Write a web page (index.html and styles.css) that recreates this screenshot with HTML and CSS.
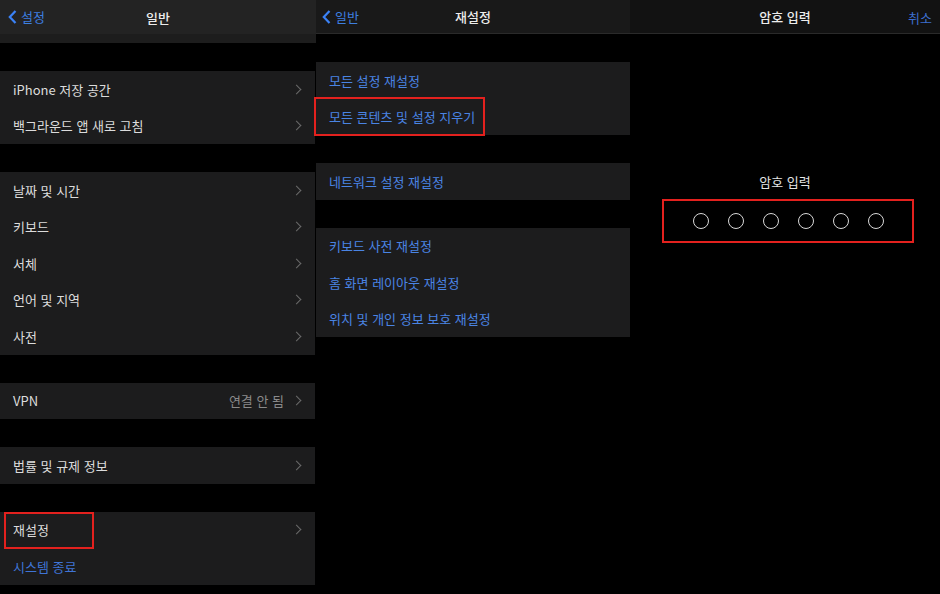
FILE: index.html
```html
<html lang="ko">
<head>
  <meta charset="UTF-8">
  <title>재설정</title>
  <link rel="stylesheet" href="styles.css">
</head>
<body>

<div class="screens">

  <!-- 일반 -->
  <div class="panel general">
    <div class="navbar">
      <span class="back"><svg width="9" height="14" viewBox="0 0 9 14"><path d="M7.5 1 L1.8 7 L7.5 13" fill="none" stroke="#3b82f6" stroke-width="2.2"/></svg>설정</span>
      <span class="title">일반</span>
    </div>
    <div class="subbar"></div>

    <div class="group">
      <div class="row"><span>iPhone 저장 공간</span><i class="chev"></i></div>
      <div class="row"><span>백그라운드 앱 새로 고침</span><i class="chev"></i></div>
    </div>

    <div class="group">
      <div class="row"><span>날짜 및 시간</span><i class="chev"></i></div>
      <div class="row"><span>키보드</span><i class="chev"></i></div>
      <div class="row"><span>서체</span><i class="chev"></i></div>
      <div class="row"><span>언어 및 지역</span><i class="chev"></i></div>
      <div class="row"><span>사전</span><i class="chev"></i></div>
    </div>

    <div class="group">
      <div class="row"><span>VPN</span><em class="value">연결 안 됨</em><i class="chev"></i></div>
    </div>

    <div class="group">
      <div class="row"><span>법률 및 규제 정보</span><i class="chev"></i></div>
    </div>

    <div class="group">
      <div class="row"><span>재설정</span><i class="chev"></i><b class="mark mark-reset"></b></div>
      <div class="row link"><span>시스템 종료</span></div>
    </div>
  </div>

  <!-- 재설정 -->
  <div class="panel reset">
    <div class="navbar">
      <span class="back"><svg width="9" height="14" viewBox="0 0 9 14"><path d="M7.5 1 L1.8 7 L7.5 13" fill="none" stroke="#3b82f6" stroke-width="2.2"/></svg>일반</span>
      <span class="title">재설정</span>
    </div>

    <div class="group">
      <div class="row link"><span>모든 설정 재설정</span></div>
      <div class="row link"><span>모든 콘텐츠 및 설정 지우기</span><b class="mark mark-erase"></b></div>
    </div>

    <div class="group">
      <div class="row link"><span>네트워크 설정 재설정</span></div>
    </div>

    <div class="group">
      <div class="row link"><span>키보드 사전 재설정</span></div>
      <div class="row link"><span>홈 화면 레이아웃 재설정</span></div>
      <div class="row link"><span>위치 및 개인 정보 보호 재설정</span></div>
    </div>
  </div>

  <!-- 암호 입력 -->
  <div class="panel passcode">
    <div class="navbar">
      <span class="title">암호 입력</span>
      <span class="cancel">취소</span>
    </div>
    <div class="prompt">암호 입력</div>
    <div class="dots">
      <i></i><i></i><i></i><i></i><i></i><i></i>
    </div>
  </div>

</div>

</body>
</html>
```

FILE: styles.css
```css
body {
  margin: 0;
  background: #000;
  font-family: "Noto Sans CJK KR", "Noto Sans", sans-serif;
  font-size: 13px;
  color: #dcdcdc;
}

.screens {
  display: flex;
  width: 940px;
  height: 594px;
  overflow: hidden;
}

.panel {
  display: flex;
  flex-direction: column;
  background: #000;
}

.general { width: 316px; }
.reset { width: 314px; }
.passcode { width: 310px; }

.navbar {
  position: relative;
  height: 34px;
  display: flex;
  align-items: center;
  justify-content: center;
  background: #1f1f1f;
  border-bottom: 1px solid #2a2a2a;
  box-sizing: border-box;
}

.general .navbar { background: #232323; border-bottom: none; }
.reset .navbar { background: #191919; }
.passcode .navbar { background: #121212; }

.subbar {
  height: 9px;
  background: #1d1d1d;
}

.title {
  color: #ececec;
  font-weight: 500;
}

.back {
  position: absolute;
  left: 8px;
  top: 9px;
  display: flex;
  align-items: center;
  gap: 4px;
  color: #3d7fe0;
  line-height: 16px;
}

.reset .back { left: 6px; }

.cancel {
  position: absolute;
  right: 8px;
  top: 8px;
  color: #3d6fd0;
}

.group {
  margin-top: 28px;
  background: #1c1c1d;
  display: flex;
  flex-direction: column;
}

.general .group { margin-right: 1px; }

.row {
  position: relative;
  height: 36.5px;
  display: flex;
  align-items: center;
  padding: 0 15px 0 13px;
}

.row span {
  flex: 1;
}

.link {
  color: #4a84e4;
}

.general .link {
  color: #3f74d6;
}

.value {
  font-style: normal;
  color: #8a8a8a;
  margin-right: 9px;
}

.chev {
  width: 6px;
  height: 6px;
  border-top: 1.5px solid #6a6a6a;
  border-right: 1.5px solid #6a6a6a;
  transform: rotate(45deg);
}

.mark {
  position: absolute;
  border: 2px solid #e3211e;
  box-sizing: border-box;
}

.mark-reset {
  left: 4px;
  top: 0;
  width: 90px;
  height: 37px;
}

.mark-erase {
  left: -2px;
  top: -2px;
  width: 171px;
  height: 39px;
}

.prompt {
  margin-top: 138px;
  text-align: center;
  color: #e4e4e4;
  line-height: 20px;
}

.dots {
  align-self: center;
  margin: 7px 0 0 6px;
  width: 252px;
  height: 44px;
  border: 2px solid #e3211e;
  box-sizing: border-box;
  display: flex;
  align-items: center;
  justify-content: center;
  gap: 19px;
}

.dots i {
  width: 16px;
  height: 16px;
  border: 1.5px solid #d8d8d8;
  border-radius: 50%;
  box-sizing: border-box;
}
```
